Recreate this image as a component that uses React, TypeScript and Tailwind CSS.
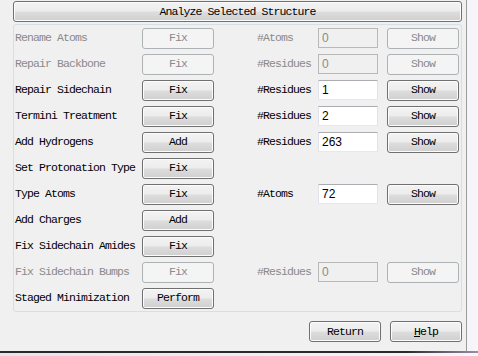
import React from 'react';

type Row = {
  label: string;
  action: string;
  enabled: boolean;
  count?: { label: string; value: string };
};

const rows: Row[] = [
  { label: 'Rename Atoms', action: 'Fix', enabled: false, count: { label: '#Atoms', value: '0' } },
  { label: 'Repair Backbone', action: 'Fix', enabled: false, count: { label: '#Residues', value: '0' } },
  { label: 'Repair Sidechain', action: 'Fix', enabled: true, count: { label: '#Residues', value: '1' } },
  { label: 'Termini Treatment', action: 'Fix', enabled: true, count: { label: '#Residues', value: '2' } },
  { label: 'Add Hydrogens', action: 'Add', enabled: true, count: { label: '#Residues', value: '263' } },
  { label: 'Set Protonation Type', action: 'Fix', enabled: true },
  { label: 'Type Atoms', action: 'Fix', enabled: true, count: { label: '#Atoms', value: '72' } },
  { label: 'Add Charges', action: 'Add', enabled: true },
  { label: 'Fix Sidechain Amides', action: 'Fix', enabled: true },
  { label: 'Fix Sidechain Bumps', action: 'Fix', enabled: false, count: { label: '#Residues', value: '0' } },
  { label: 'Staged Minimization', action: 'Perform', enabled: true },
];

const mono = "font-['Liberation_Mono',monospace] text-[11.5px] tracking-[-0.9px]";

// --- classic win7 push button ---
function WinButton({ children, enabled = true, className = '' }: any) {
  return (
    <button
      className={`${mono} h-[21px] rounded-[3px] border flex items-center justify-center leading-none ${
        enabled
          ? 'border-[#707070] text-black bg-[linear-gradient(#f3f3f3_0%,#ececec_48%,#dddddd_52%,#cfcfcf_100%)] shadow-[inset_0_0_0_1px_#fcfcfc]'
          : 'border-[#adb2b5] text-[#8a8a8a] bg-[#f4f4f4]'
      } ${className}`}
    >
      {children}
    </button>
  );
}

function CountBox({ value, enabled }: { value: string; enabled: boolean }) {
  return (
    <div
      className={`w-[60px] h-[20px] border flex items-center pl-[3px] font-['Liberation_Sans',sans-serif] text-[12px] ${
        enabled
          ? 'bg-white border-[#abadb3] border-x-[#e2e3ea] border-b-[#e3e9ef] text-black'
          : 'bg-[#f0f0f0] border-[#b8b8b8] text-[#8a8a8a]'
      }`}
    >
      {value}
    </div>
  );
}

export default function App() {
  return (
    <div className="w-[478px] h-[356px] overflow-hidden bg-[linear-gradient(90deg,#e9e3ef,#f7f4fa)] flex flex-col">
      <div className="flex h-[351px]">
        <div className="w-[467px] bg-[#f0f0f0] border-r border-[#9c9c9c] pl-[13px] pt-[1px] flex flex-col">
          {/* top action */}
          <WinButton className="w-[449px] h-[20px]">Analyze Selected Structure</WinButton>

          {/* GROUP BOX */}
          <div className="mt-[2px] w-[449px] border border-[#d5dfe5] rounded-[3px] flex flex-col">
            {rows.map((row) => {
              const txt = row.enabled ? 'text-black' : 'text-[#8a8a8a]';
              return (
                <div key={row.label} className="h-[26px] flex items-center">
                  <div className={`${mono} ${txt} w-[128px] pl-[1px] whitespace-nowrap`}>{row.label}</div>
                  <WinButton enabled={row.enabled} className="w-[72px]">{row.action}</WinButton>
                  {row.count && (
                    <div className="flex items-center ml-[43px]">
                      <div className={`${mono} ${txt} w-[61px] whitespace-nowrap`}>{row.count.label}</div>
                      <CountBox value={row.count.value} enabled={row.enabled} />
                      <WinButton enabled={row.enabled} className="w-[72px] ml-[9px]">Show</WinButton>
                    </div>
                  )}
                </div>
              );
            })}
          </div>

          {/* bottom buttons */}
          <div className="flex justify-end gap-[9px] w-[449px] mt-[9px]">
            <WinButton className="w-[72px]">Return</WinButton>
            <WinButton className="w-[72px]"><span className="underline">H</span>elp</WinButton>
          </div>
        </div>
      </div>
      <div className="h-[2px] bg-[linear-gradient(90deg,#2a2a2a_0%,#2a2a2a_85%,#9a8fa6_100%)]" />
    </div>
  );
}
